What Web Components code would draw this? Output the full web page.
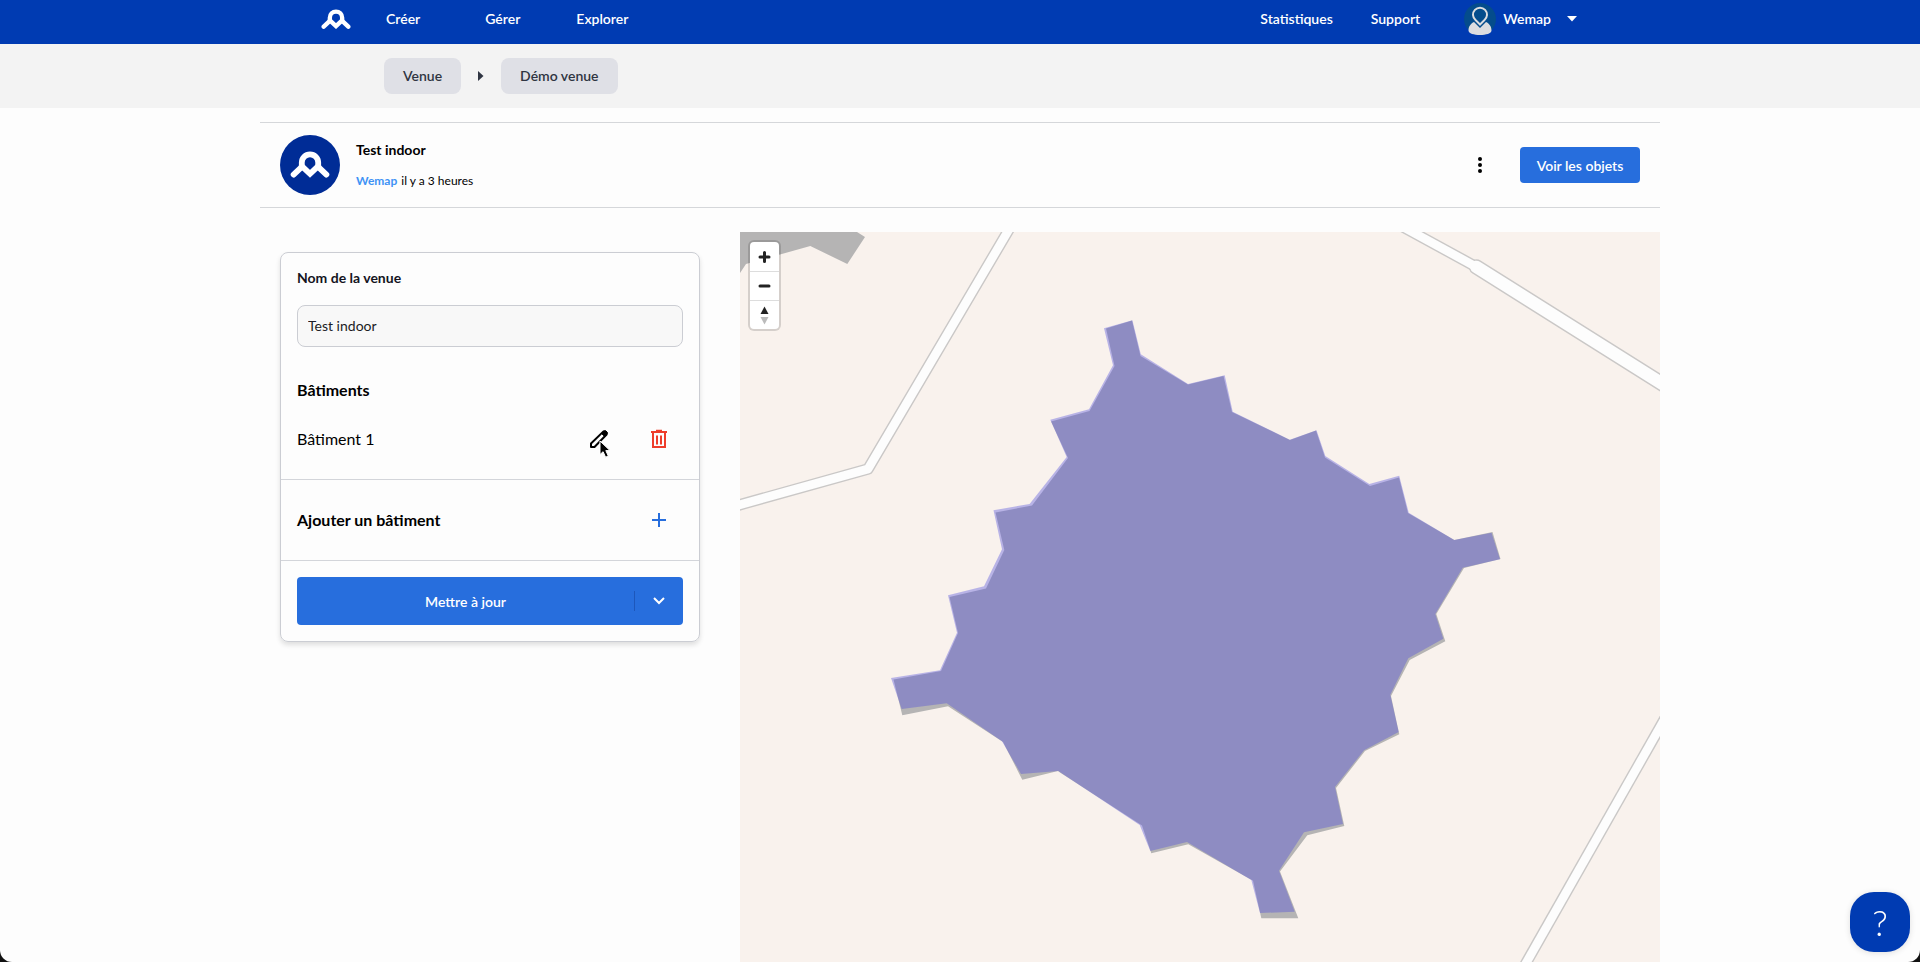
<!DOCTYPE html>
<html lang="fr">
<head>
<meta charset="utf-8">
<title>Wemap – Test indoor</title>
<style>
html { background: #111; }
body {
  margin: 0; min-height: 100vh; display: flex; flex-direction: column;
  background: #fdfdfd; border-radius: 0 0 12px 12px; overflow: hidden;
  font-family: Lato, "Liberation Sans", sans-serif; font-size: 14px; line-height: 20px; color: #000;
}
main {
  flex: 1; display: flex; flex-direction: column; box-sizing: border-box;
  width: 100%; max-width: 1400px; margin: 0 auto; padding-top: 14px;
}
.content { flex: 1; display: grid; grid-template-columns: 420px 1fr; gap: 40px; padding: 24px 0 0 20px; }
.content venue-form { align-self: start; margin-top: 20px; }
</style>
</head>
<body>
<wm-navbar></wm-navbar>
<wm-breadcrumb>
  <wm-crumb>Venue</wm-crumb>
  <wm-crumb>Démo venue</wm-crumb>
</wm-breadcrumb>
<main>
  <venue-header author="Wemap">
    <span slot="title">Test indoor</span>
    <span slot="date">il y a 3 heures</span>
  </venue-header>
  <div class="content">
    <venue-form name="Test indoor">
      <building-row>Bâtiment 1</building-row>
    </venue-form>
    <venue-map></venue-map>
  </div>
</main>
<help-button></help-button>

<script>
class Base extends HTMLElement {
  constructor() {
    super();
    this.attachShadow({ mode: 'open' });
  }
  connectedCallback() {
    if (!this.shadowRoot.childNodes.length) this.shadowRoot.innerHTML = this.render();
  }
}

customElements.define('wm-logo', class extends Base {
  render() {
    return `<style>:host{display:block} svg{display:block;width:100%}</style>
    <svg viewBox="0 0 40 27" fill="none" stroke="#fff" stroke-width="5.8" stroke-linecap="round" stroke-linejoin="round" aria-hidden="true">
      <path d="M3.6 23.6 L11.8 15.8 V11.6 A8.2 8.2 0 0 1 28.2 11.6 V15.8 L36.4 23.6"/>
      <path d="M11.8 15.2 L20 22.8 L28.2 15.2" stroke-linejoin="miter"/>
    </svg>`;
  }
});

customElements.define('wm-navbar', class extends Base {
  render() {
    return `<style>
      :host{display:block;background:#003bb2;color:#fff}
      nav{box-sizing:border-box;height:44px;max-width:1280px;margin:0 auto;padding:0 23px 6px 1px;display:flex;align-items:center;font-weight:600}
      a{color:inherit;text-decoration:none}
      .home{width:30px;margin-right:35px}
      .create{margin-right:65px}.manage{margin-right:56px}.explore{margin-right:auto}
      .stats{margin-right:38px}.support{margin-right:44px}
      button{all:unset;display:flex;align-items:center;font:inherit;cursor:pointer}
      .avatar{width:32px;height:32px;margin-right:7px}
      .caret{width:10px;height:6px;margin-left:16px}
    </style>
    <nav>
      <a class="home" href="#" aria-label="Accueil"><wm-logo></wm-logo></a>
      <a class="create" href="#">Créer</a>
      <a class="manage" href="#">Gérer</a>
      <a class="explore" href="#">Explorer</a>
      <a class="stats" href="#">Statistiques</a>
      <a class="support" href="#">Support</a>
      <button type="button">
        <svg class="avatar" viewBox="0 0 32 32" aria-hidden="true">
          <circle cx="16" cy="16" r="16" fill="#044c8c"/>
          <path d="M16 32 C10 32 4.500 30.500 4.500 27.500 C4.500 23 7 20.500 10 19 L16 25 L22 19 C25 20.500 27.500 23 27.500 27.500 C27.500 30.500 22 32 16 32Z" fill="#dcdde0"/>
          <path d="M16 21.500 L11.500 17 A7 7 0 1 1 20.500 17Z" fill="#044c8c" stroke="#dcdde0" stroke-width="2"/>
        </svg>
        <span>Wemap</span>
        <svg class="caret" viewBox="0 0 10 6" aria-hidden="true"><path d="M0 0H10L5 5.500Z" fill="#fff"/></svg>
      </button>
    </nav>`;
  }
});

customElements.define('wm-breadcrumb', class extends Base {
  render() {
    return `<style>
      :host{display:block;background:#f3f3f3}
      nav{box-sizing:border-box;max-width:1152px;height:64px;margin:0 auto;padding:14px 0;display:flex}
    </style>
    <nav aria-label="Fil d'Ariane"><slot></slot></nav>`;
  }
});

customElements.define('wm-crumb', class extends Base {
  render() {
    return `<style>
      :host{display:flex;align-items:center}
      svg{width:6px;height:10px;margin:0 17px}
      :host(:first-child) svg{display:none}
      a{box-sizing:border-box;height:36px;padding:8px 19px;border-radius:8px;background:#dfe0e6;color:#2f3542;font-weight:600;text-decoration:none}
    </style>
    <svg viewBox="0 0 6 10" aria-hidden="true"><path d="M0 0L5.500 5L0 10Z" fill="#2f3542"/></svg>
    <a href="#"><slot></slot></a>`;
  }
});

customElements.define('venue-header', class extends Base {
  render() {
    return `<style>
      :host{display:flex;align-items:center;box-sizing:border-box;height:86px;padding:0 20px;border:solid #d5d7da;border-width:1px 0}
      .badge{box-sizing:border-box;width:60px;height:60px;padding:16px 10px;border-radius:50%;background:#002c96}
      .text{margin:0 auto 0 16px}
      h1{margin:0 0 14px;font-size:14px;line-height:18px;font-weight:700}
      p{margin:0;font-size:12px;line-height:16px}
      a{color:#3f93f5;font-weight:700;text-decoration:none;margin-right:1px}
      .more{all:unset;width:20px;height:24px;margin-right:30px;cursor:pointer}
      .objects{border:0;border-radius:4px;width:120px;height:36px;padding:2px 0 0;background:#276edd;color:#fff;font:600 14px/20px Lato,sans-serif}
    </style>
    <div class="badge"><wm-logo></wm-logo></div>
    <div class="text">
      <h1><slot name="title"></slot></h1>
      <p><a href="#">${this.getAttribute('author')}</a> <slot name="date"></slot></p>
    </div>
    <button class="more" type="button" aria-label="Plus d'options">
      <svg width="20" height="24" viewBox="0 0 20 24" aria-hidden="true"><g><circle cx="10" cy="6" r="2"/><circle cx="10" cy="12" r="2"/><circle cx="10" cy="18" r="2"/></g></svg>
    </button>
    <button class="objects" type="button">Voir les objets</button>`;
  }
});

customElements.define('building-row', class extends Base {
  render() {
    return `<style>
      :host{display:flex;align-items:center;height:26px;font-size:16px;line-height:24px}
      .name{flex:1}
      button{all:unset;position:relative;width:20px;height:20px;cursor:pointer}
      .edit{margin-right:40px}
      .delete{margin-right:14px}
      svg{display:block}
      .pointer{position:absolute;left:10px;top:11px}
    </style>
    <span class="name"><slot></slot></span>
    <button class="edit" type="button" aria-label="Modifier">
      <svg width="20" height="20" viewBox="0 0 20 20" fill="none" stroke="#000" stroke-width="2" stroke-linejoin="round" aria-hidden="true">
        <path d="M2 18 V14.500 L14.500 2.400 L17.600 5.500 L5.500 18Z"/>
        <path d="M12.500 4.500 L15 2 Q16 1.200 17 2 L18.200 3.200 Q19 4.200 18 5.200 L15.700 7.500Z" fill="#000" stroke-width="1"/>
      </svg>
      <svg class="pointer" width="13" height="19" viewBox="0 0 13 19" aria-hidden="true">
        <path d="M1 1 V14.500 L4.100 11.700 L6.600 17.200 L9.300 16 L6.800 10.600 H11Z" fill="#000" stroke="#fff" stroke-width="1"/>
      </svg>
    </button>
    <button class="delete" type="button" aria-label="Supprimer">
      <svg width="20" height="20" viewBox="0 0 20 20" fill="none" stroke="#ee3d2b" aria-hidden="true">
        <path d="M4 4V18H16V4" stroke-width="2"/>
        <path d="M2 3H18" stroke-width="2"/><path d="M7 1.500H13" stroke-width="1.500"/>
        <path d="M8 6.500V15.500M12 6.500V15.500" stroke-width="2"/>
      </svg>
    </button>`;
  }
});

customElements.define('venue-form', class extends Base {
  render() {
    return `<style>
      :host{display:block;box-sizing:border-box;border:1px solid #cbcdd3;border-radius:8px;box-shadow:0 3px 5px rgba(0,0,0,.12)}
      section{padding:16px;border-bottom:1px solid #d3d5da}
      section:last-child{border:0}
      label{display:block;font-weight:700;line-height:18px;color:#14141e;margin-bottom:18px}
      input{display:block;box-sizing:border-box;width:100%;height:42px;padding:0 10px 2px;border:1px solid #cbcdd3;border-radius:8px;background:#f8f8f8;color:#1c1c24;font:14px/20px Lato,sans-serif}
      h2{margin:0;font-size:16px;line-height:24px;font-weight:700}
      .details{padding-bottom:27px}
      .details h2{margin:31px 0 24px}
      .add{display:flex;align-items:center;justify-content:space-between;box-sizing:border-box;height:81px;padding-right:30px}
      button{all:unset;cursor:pointer}
      svg{display:block}
      .save{display:flex;align-items:center;height:48px;border-radius:4px;background:#276edd;color:#fff}
      .save .update{flex:1;padding-top:2px;text-align:center;font-weight:600}
      .save .options{width:48px;height:20px;border-left:1px solid #1d57bb;display:flex;align-items:center;justify-content:center}
    </style>
    <section class="details">
      <label for="name">Nom de la venue</label>
      <input id="name" type="text" value="${this.getAttribute('name')}">
      <h2>Bâtiments</h2>
      <slot></slot>
    </section>
    <section class="add">
      <h2>Ajouter un bâtiment</h2>
      <button type="button" aria-label="Ajouter"><svg width="20" height="20" viewBox="0 0 20 20" aria-hidden="true"><path d="M10 3V17M3 10H17" stroke="#276edd" stroke-width="2"/></svg></button>
    </section>
    <section>
      <div class="save">
        <button class="update" type="button">Mettre à jour</button>
        <button class="options" type="button" aria-label="Autres actions"><svg width="12" height="8" viewBox="0 0 12 8" aria-hidden="true"><path d="M1 1L6 6L11 1" fill="none" stroke="#fff" stroke-width="2"/></svg></button>
      </div>
    </section>`;
  }
});

customElements.define('map-controls', class extends Base {
  render() {
    return `<style>
      :host{display:block;width:29px;border-radius:4px;background:#fff;box-shadow:0 0 0 2px rgba(0,0,0,.14)}
      button{display:block;box-sizing:border-box;width:29px;height:29px;padding:0;border:0;background:none;cursor:pointer}
      button + button{border-top:1px solid #ddd}
      svg{display:block;margin:auto}
    </style>
    <button type="button" aria-label="Zoom avant"><svg width="29" height="28" viewBox="0 0 29 28"><path d="M14.500 9.500V18.500M10 14H19" stroke="#222" stroke-width="3" stroke-linecap="round"/></svg></button>
    <button type="button" aria-label="Zoom arrière"><svg width="29" height="28" viewBox="0 0 29 28"><path d="M10 14H19" stroke="#222" stroke-width="3" stroke-linecap="round"/></svg></button>
    <button type="button" aria-label="Orientation nord"><svg width="29" height="28" viewBox="0 0 29 28"><path d="M10.500 13L14.500 5.500L18.500 13Z" fill="#222"/><path d="M10.500 16L14.500 23.500L18.500 16Z" fill="#bbb"/></svg></button>`;
  }
});

customElements.define('venue-map', class extends Base {
  render() {
    return `<style>
      :host{display:block;position:relative;min-height:480px;background:#f9f2ed;overflow:hidden}
      .tiles{position:absolute;inset:0;width:100%;height:100%}
      map-controls{position:absolute;left:10px;top:10px}
    </style>
    <svg class="tiles" viewBox="740 232 920 730" preserveAspectRatio="xMidYMid slice" role="img" aria-label="Plan de la venue">
      <g fill="none" stroke="#cac8c7" stroke-linejoin="round">
        <path stroke-width="11.400" d="M1016 217.500L868 469L730 507.500"/>
        <path stroke-width="11.400" d="M1394 222L1475 266.200"/>
        <path stroke-width="15.400" stroke-linecap="round" d="M1476.500 267L1680 394.900"/>
        <path stroke-width="11.400" d="M1672 706L1515 982.500"/>
      </g>
      <g fill="none" stroke="#fdfdfd" stroke-linejoin="round">
        <path stroke-width="8.600" d="M1016 217.500L868 469L730 507.500"/>
        <path stroke-width="8.600" d="M1394 222L1475 266.200"/>
        <path stroke-width="12.600" stroke-linecap="round" d="M1476.500 267L1680 394.900"/>
        <path stroke-width="8.600" d="M1672 706L1515 982.500"/>
      </g>
      <path fill="#b5b4b4" d="M740 232H857L865 237L847.300 264L810.300 246L780 254.500L746 264L740 273Z"/>
      <path fill="#b5b4b4" d="M1106 328.500L1132 320.500L1140.500 356L1188 384.500L1223.500 376L1232 412L1290 440L1316 430.500L1325 457.500L1370 486L1399 477.500L1408 513L1454.300 540L1492.500 532L1500.500 559L1464 568L1436.300 614L1445.300 641.300L1409.700 660L1391 696L1399.300 734.300L1365 751L1336 788L1344.300 826L1307.300 835.300L1280 871.500L1298.300 918.300L1261.300 918.300L1253 880.700L1188.300 844.300L1151.300 853.300L1142 825.500L1060 772.500L1058 771L1022.300 779.700L1003 742L948 706.300L902.300 715.300L893.500 679.500L941 671L958 633L949.500 597L986 588.500L1004.300 550L995.500 512.500L1032 505.500L1068 458L1051 421.500L1089.500 411L1114.500 366Z"/>
      <path fill="#4e4bdb" fill-opacity=".38" d="M1104 328.300L1132.400 320.300L1140.800 354.300L1188 384L1224.700 375.300L1232.700 411.700L1289.700 439.700L1316.500 430.300L1325.300 456L1369.300 484L1399.200 475.700L1408.700 512.700L1454.300 540L1491.500 532.700L1500 559.300L1462.700 567.700L1435.300 614L1443.300 638.700L1408.300 658.300L1390.300 694.700L1398.700 732L1364 750.300L1335 787L1343 824L1304 832.300L1279 870.700L1294.700 911.700L1260 913L1251.300 880L1187 842L1150.300 851L1139.700 825L1058.300 771L1021 774L1002 741.300L946.700 703.300L901.700 709L891 678L940 670.300L957 632.700L948 595.300L984 586.300L1002 549.300L993.500 510.300L1029.600 504L1066.700 457L1050.300 419.700L1089 409.300L1113 365.300Z"/>
    </svg>
    <map-controls></map-controls>`;
  }
});

customElements.define('help-button', class extends Base {
  render() {
    return `<style>
      :host{position:fixed;right:10px;bottom:10px}
      button{display:block;width:60px;height:60px;padding:0;border:0;border-radius:24px;background:#003bb2;color:#fff;font:300 36px/60px Lato,sans-serif;box-shadow:0 1px 6px rgba(0,0,0,.12);cursor:pointer}
    </style>
    <button type="button" aria-label="Aide">?</button>`;
  }
});
</script>
</body>
</html>
